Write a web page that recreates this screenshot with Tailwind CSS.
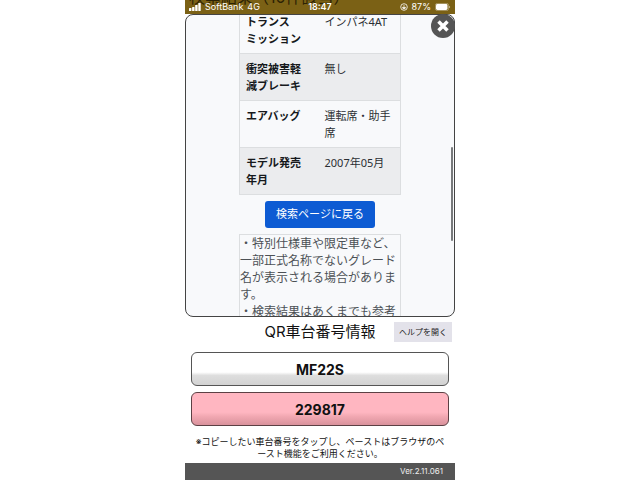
<!DOCTYPE html>
<html lang="ja" class="h-full">
<head>
    <meta charset="UTF-8">
    <meta name="viewport" content="width=device-width, initial-scale=1.0">
    <title>QR車台番号情報</title>
    <script src="https://cdn.jsdelivr.net/npm/@tailwindcss/browser@4"></script>
</head>
<body class="h-full bg-white font-['Inter','Noto_Sans_CJK_JP',sans-serif] text-[#111111]">
    <div class="flex flex-col h-full w-full max-w-[270px] mx-auto overflow-hidden">
        <!-- Status Bar -->
        <header class="relative flex items-center h-[14px] shrink-0 px-1 bg-[#7b6115] text-white text-[9px] leading-[14px] overflow-hidden">
            <div class="absolute left-1 -top-3 text-[16px] leading-[18px] text-[#2c2204] whitespace-nowrap" aria-hidden="true">検索結果（10件該当）</div>
            <div class="relative flex flex-1 items-center gap-1">
                <svg class="w-3 h-2" viewBox="0 0 12 8" fill="currentColor">
                    <rect x="0" y="5" width="2.400" height="3" rx=".5"/>
                    <rect x="3.100" y="4" width="2.400" height="4" rx=".5"/>
                    <rect x="6.200" y="2" width="2.400" height="6" rx=".5"/>
                    <rect x="9.300" y="0" width="2.400" height="8" rx=".5"/>
                </svg>
                <span>SoftBank</span>
                <span>4G</span>
            </div>
            <span class="relative font-semibold">18:47</span>
            <div class="relative flex flex-1 items-center justify-end gap-1">
                <svg class="w-2 h-2" viewBox="0 0 8 8" fill="none" stroke="currentColor">
                    <circle cx="4" cy="4" r="3.3" stroke-width=".8"/>
                    <path d="M2.3 4.4h3.4M4 2.2v1.5M3 4.4v1.2h2V4.4" stroke-width=".9"/>
                </svg>
                <span>87%</span>
                <svg class="w-4 h-2" viewBox="0 0 16 8" fill="currentColor">
                    <rect x=".4" y=".4" width="13.2" height="7.2" rx="2" fill="none" stroke="currentColor" stroke-opacity=".5" stroke-width=".7"/>
                    <rect x="1" y="1" width="11.500" height="6" rx="1.400"/>
                    <path d="M14.400 3v2c1-.4 1-1.600 0-2z"/>
                </svg>
            </div>
        </header>

        <!-- Browser Panel -->
        <main class="relative flex-1 min-h-0">
            <div class="h-full overflow-hidden rounded-lg border border-[#444444] bg-[#f8f9fb] font-['Noto_Sans','Noto_Sans_CJK_JP',sans-serif]">
                <div class="w-[162px] mx-auto -mt-[9px]">
                    <table class="w-full table-fixed border-collapse border border-[#dcdee0] text-[11px] leading-[17px] text-[#2b2f33]">
                        <tbody>
                            <tr class="border-b border-[#dcdee0]">
                                <th class="w-[79px] px-[6px] py-[6px] text-left align-top font-bold text-[#16191c]">トランス<br>ミッション</th>
                                <td class="px-[6px] py-[6px] align-top">インパネ4AT</td>
                            </tr>
                            <tr class="border-b border-[#dcdee0] bg-[#ebecee]">
                                <th class="px-[6px] py-[6px] text-left align-top font-bold text-[#16191c]">衝突被害軽<br>減ブレーキ</th>
                                <td class="px-[6px] py-[6px] align-top">無し</td>
                            </tr>
                            <tr class="border-b border-[#dcdee0]">
                                <th class="px-[6px] py-[6px] text-left align-top font-bold text-[#16191c]">エアバッグ</th>
                                <td class="px-[6px] py-[6px] align-top">運転席・助手<br>席</td>
                            </tr>
                            <tr class="border-b border-[#dcdee0] bg-[#ebecee]">
                                <th class="px-[6px] py-[6px] text-left align-top font-bold text-[#16191c]">モデル発売<br>年月</th>
                                <td class="px-[6px] py-[6px] align-top">2007年05月</td>
                            </tr>
                        </tbody>
                    </table>
                    <div class="flex justify-center py-[6px]">
                        <button type="button" class="h-[27px] px-[11px] rounded-[3px] bg-[#0d5bd3] text-[11px] text-white whitespace-nowrap">検索ページに戻る</button>
                    </div>
                    <div class="border border-[#dcdee0] text-[12px] leading-[17px] text-[#4c5156] whitespace-nowrap">
                        <p>・特別仕様車や限定車など、<br>一部正式名称でないグレード<br>名が表示される場合がありま<br>す。</p>
                        <p>・検索結果はあくまでも参考</p>
                    </div>
                </div>
            </div>
            <div class="absolute right-[2px] top-[133px] w-[2px] h-[94px] rounded-full bg-[#77797b]"></div>
            <button type="button" aria-label="閉じる" class="absolute right-0 top-0 w-6 h-6 rounded-full bg-[#555555] text-white">
                <svg class="w-6 h-6" viewBox="0 0 24 24" fill="none" stroke="currentColor" stroke-width="3.500">
                    <path d="M7.500 7.500l9 9M16.500 7.500l-9 9"/>
                </svg>
            </button>
        </main>

        <!-- Chassis Number -->
        <section class="shrink-0">
            <div class="grid grid-cols-[1fr_auto_1fr] items-center h-[29px]">
                <h1 class="col-start-2 text-[15px] leading-5 whitespace-nowrap">QR車台番号情報</h1>
                <button type="button" class="justify-self-end h-5 px-[5px] mr-[3px] bg-[#e3e2ea] text-[8px] text-[#222222] whitespace-nowrap">ヘルプを開く</button>
            </div>
            <div class="flex flex-col gap-[6px] px-[6px] pt-[6px]">
                <button type="button" class="h-[34px] rounded-md border border-[#555555] bg-linear-to-b from-white from-60% via-[#dedede] via-70% to-[#d2d2d2] text-[14px] font-bold">MF22S</button>
                <button type="button" class="h-[34px] rounded-md border border-[#5c4044] bg-linear-to-b from-[#ffb6c1] from-60% via-[#f0a6b0] via-75% to-[#d9929c] text-[14px] font-bold">229817</button>
            </div>
            <p class="pt-[10px] pb-[3px] text-center text-[9px] leading-[12px] whitespace-nowrap">※コピーしたい車台番号をタップし、ペーストはブラウザのペ<br>ースト機能をご利用ください。</p>
        </section>

        <!-- Footer -->
        <footer class="shrink-0 h-[17px] pr-3 bg-[#555555] text-right text-[8px] leading-[17px] text-[#eeeeee]">Ver.2.11.061</footer>
    </div>
</body>
</html>
